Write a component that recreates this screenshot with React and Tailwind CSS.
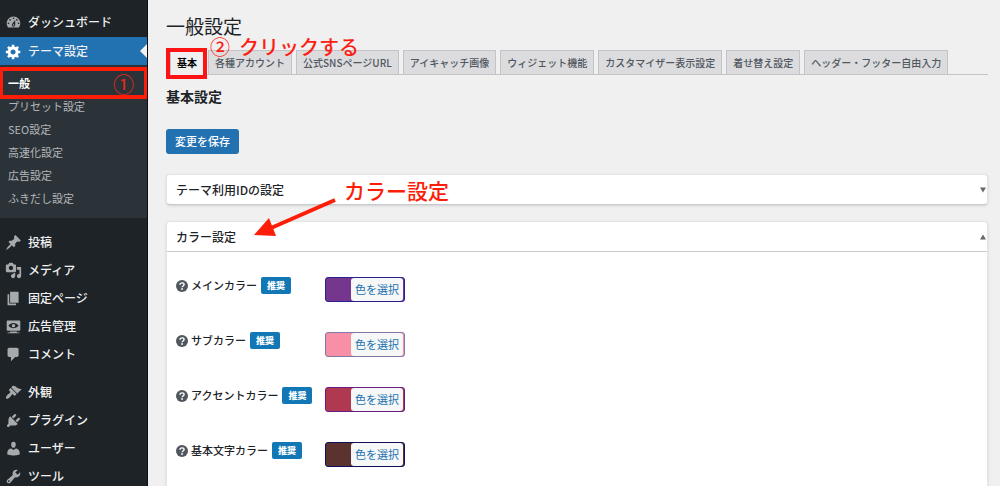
const PATHS = {
  dashboard:
    'M3.76 16h12.48c1.1-1.37 1.76-3.11 1.76-5 0-4.42-3.58-8-8-8s-8 3.58-8 8c0 1.89.66 3.63 1.76 5zM10 4c.55 0 1 .45 1 1s-.45 1-1 1-1-.45-1-1 .45-1 1-1zM6 6c.55 0 1 .45 1 1s-.45 1-1 1-1-.45-1-1 .45-1 1-1zm8 0c.55 0 1 .45 1 1s-.45 1-1 1-1-.45-1-1 .45-1 1-1zm-5.37 5.55L12 7v6c0 1.1-.9 2-2 2s-2-.9-2-2c0-.57.24-1.08.63-1.45zM4 10c.55 0 1 .45 1 1s-.45 1-1 1-1-.45-1-1 .45-1 1-1zm12 0c.55 0 1 .45 1 1s-.45 1-1 1-1-.45-1-1 .45-1 1-1zm-5 3c0-.55-.45-1-1-1s-1 .45-1 1 .45 1 1 1 1-.45 1-1z',
  gear:
    'M18 12h-2.18c-.17.7-.44 1.35-.81 1.93l1.54 1.54-2.1 2.1-1.54-1.54c-.58.36-1.23.63-1.91.79V19H8v-2.18c-.68-.16-1.33-.43-1.91-.79l-1.54 1.54-2.12-2.12 1.54-1.54c-.36-.58-.63-1.23-.79-1.91H1V9.03h2.17c.16-.7.44-1.35.8-1.94L2.43 5.55l2.1-2.1 1.54 1.54c.58-.37 1.24-.64 1.93-.81V2h3v2.18c.68.16 1.33.43 1.91.79l1.54-1.54 2.12 2.12-1.54 1.54c.36.59.64 1.24.8 1.94H18V12zm-8.5 1.5c1.66 0 3-1.34 3-3s-1.34-3-3-3-3 1.34-3 3 1.34 3 3 3z',
  pin:
    'M10.44 3.02l1.82-1.82 6.36 6.35-1.83 1.82c-1.05-.68-2.48-.57-3.41.36l-.75.75c-.92.93-1.04 2.35-.35 3.41l-1.83 1.82-2.41-2.41-2.8 2.79c-.42.42-3.38 2.71-3.8 2.29s1.86-3.39 2.28-3.81l2.79-2.79L4.1 9.36l1.83-1.82c1.05.69 2.48.57 3.4-.36l.75-.75c.93-.92 1.05-2.35.36-3.41z',
  media:
    'M13 11V4c0-.55-.45-1-1-1h-1.67L9 1H5L3.67 3H2c-.55 0-1 .45-1 1v7c0 .55.45 1 1 1h10c.55 0 1-.45 1-1zM7 4.5c1.38 0 2.5 1.12 2.5 2.5S8.38 9.5 7 9.5 4.5 8.38 4.5 7 5.62 4.5 7 4.5zM14 6h5v10.5c0 1.38-1.12 2.5-2.5 2.5S14 17.88 14 16.5s1.12-2.5 2.5-2.5c.17 0 .34.02.5.05V9h-3V6zm-4 8.05V13h2v3.5c0 1.38-1.12 2.5-2.5 2.5S7 17.88 7 16.5 8.12 14 9.5 14c.17 0 .34.02.5.05z',
  page: 'M6 15V2h10v13H6zm-1 1h8v2H3V5h2v11z',
  view:
    'M18 14V4c0-.55-.45-1-1-1H3c-.55 0-1 .45-1 1v10c0 .55.45 1 1 1h14c.55 0 1-.45 1-1zm-8-8c2.3 0 4.4 1.14 6 3-1.6 1.86-3.7 3-6 3s-4.4-1.14-6-3c1.6-1.86 3.7-3 6-3zm2 3c0-1.1-.9-2-2-2s-2 .9-2 2 .9 2 2 2 2-.9 2-2zm2 8h3v1H3v-1h3v-1h8v1z',
  comment: 'M5 2h9c1.1 0 2 .9 2 2v7c0 1.1-.9 2-2 2h-2l-5 5v-5H5c-1.1 0-2-.9-2-2V4c0-1.1.9-2 2-2z',
  brush:
    'M14.48 11.06L7.41 3.99l1.5-1.5c.5-.56 2.3-.47 3.51.32 1.21.8 1.43 1.28 2.91 2.1 1.18.64 2.45 1.26 4.45.85zm-.71.71L6.7 4.7 4.93 6.47c-.39.39-.39 1.02 0 1.41l1.06 1.06c.39.39.39 1.03 0 1.42-.6.6-1.43 1.11-2.21 1.69-.35.26-.7.53-1.01.84C1.43 14.23.4 16.08 1.4 17.07c.99 1 2.84-.03 4.18-1.36.31-.31.58-.66.85-1.02.57-.78 1.08-1.61 1.69-2.21.39-.39 1.02-.39 1.41 0l1.06 1.06c.39.39 1.02.39 1.41 0z',
  plug:
    'M13.11 4.36L9.87 7.6 8 5.73l3.24-3.24c.35-.34 1.05-.2 1.56.32.52.51.66 1.21.31 1.55zm-8 1.77l.91-1.12 9.01 9.01-1.19.84c-.71.71-2.63 1.16-3.82 1.16H6.14L4.9 17.26c-.59.59-1.54.59-2.12 0-.59-.58-.59-1.53 0-2.12l1.24-1.24v-3.88c0-1.13.4-3.19 1.09-3.89zm7.26 3.97l3.24-3.24c.34-.35 1.04-.21 1.55.31.52.51.66 1.21.31 1.55l-3.24 3.25z',
  user:
    'M10 9.25c-2.27 0-2.73-3.44-2.73-3.44C7 4.02 7.82 2 9.97 2c2.16 0 2.98 2.02 2.71 3.81 0 0-.41 3.44-2.68 3.44zm0 2.57L12.72 10c2.39 0 4.52 2.33 4.52 4.53v2.49s-3.65 1.13-7.24 1.13c-3.65 0-7.24-1.13-7.24-1.13v-2.49c0-2.25 1.94-4.48 4.47-4.48z',
  wrench:
    'M16.68 9.77c-1.34 1.34-3.3 1.67-4.95.99l-5.41 6.52c-.99.99-2.59.99-3.58 0s-.99-2.59 0-3.57l6.52-5.42c-.68-1.65-.35-3.61.99-4.95 1.28-1.28 3.12-1.62 4.72-1.06l-2.89 2.89 2.82 2.82 2.86-2.87c.53 1.58.18 3.39-1.08 4.65zM3.81 16.21c.4.39 1.04.39 1.43 0 .4-.4.4-1.04 0-1.43-.39-.4-1.03-.4-1.43 0-.39.39-.39 1.03 0 1.43z',
};

const SUBMENU = ['一般', 'プリセット設定', 'SEO設定', '高速化設定', '広告設定', 'ふきだし設定'];

const CONTENT_MENU = [
  ['pin', '投稿'],
  ['media', 'メディア'],
  ['page', '固定ページ'],
  ['view', '広告管理'],
  ['comment', 'コメント'],
];

const SITE_MENU = [
  ['brush', '外観'],
  ['plug', 'プラグイン'],
  ['user', 'ユーザー'],
  ['wrench', 'ツール'],
];

const TABS = [
  '基本',
  '各種アカウント',
  '公式SNSページURL',
  'アイキャッチ画像',
  'ウィジェット機能',
  'カスタマイザー表示設定',
  '着せ替え設定',
  'ヘッダー・フッター自由入力',
];

const COLORS = [
  { label: 'メインカラー', swatch: 'bg-[#75368d]', border: 'border-[#29208f]' },
  { label: 'サブカラー', swatch: 'bg-[#f78fa7]', border: 'border-[#8079a8]' },
  { label: 'アクセントカラー', swatch: 'bg-[#b03850]', border: 'border-[#661c80]' },
  { label: '基本文字カラー', swatch: 'bg-[#5a332f]', border: 'border-[#10115c]' },
];

function Icon({ name }) {
  return (
    <svg viewBox="0 0 20 20" className="size-[17px] shrink-0 fill-current" aria-hidden="true">
      <path d={PATHS[name]} />
    </svg>
  );
}

function MenuItem({ icon, label, active }) {
  return (
    <li className={active ? 'relative bg-[#2271b1] text-white' : 'text-[#a7aaad]'}>
      <a href="#" className="flex h-7 items-center gap-[6px] pl-[5px] text-[12px] font-medium">
        <Icon name={icon} />
        <span className="text-[#f0f0f1]">{label}</span>
      </a>
      {active && (
        <span className="absolute top-1/2 right-0 -translate-y-1/2 border-y-[7px] border-r-[7px] border-y-transparent border-r-[#f0f0f1]" />
      )}
    </li>
  );
}

function Sidebar() {
  return (
    <nav className="w-[148px] shrink-0 overflow-hidden border-r border-[#0c0f12] bg-[#1d2327] pt-2">
      <ul>
        <MenuItem icon="dashboard" label="ダッシュボード" />
      </ul>
      <ul className="mt-px">
        <MenuItem icon="gear" label="テーマ設定" active />
      </ul>
      <ul className="bg-[#2c3338] pt-[7px] pb-2">
        {SUBMENU.map((label, i) => (
          <li key={label} className="relative">
            <a
              href="#"
              className={`flex h-[23px] items-center pl-2 text-[11px] ${
                i === 0 ? 'font-bold text-white' : 'text-[#b3b7bb]'
              }`}
            >
              {label}
            </a>
            {i === 0 && (
              <span className="absolute -inset-x-px -top-[5px] -bottom-1 flex items-center justify-end border-4 border-[#fc1e08] pr-[10px] text-[21px] leading-none text-[#e8291a]">
                ①
              </span>
            )}
          </li>
        ))}
      </ul>
      <ul className="mt-[10px]">
        {CONTENT_MENU.map(([icon, label]) => (
          <MenuItem key={label} icon={icon} label={label} />
        ))}
      </ul>
      <ul className="mt-[10px]">
        {SITE_MENU.map(([icon, label]) => (
          <MenuItem key={label} icon={icon} label={label} />
        ))}
      </ul>
    </nav>
  );
}

function Tabs() {
  return (
    <nav className="relative mt-3 flex items-end gap-1 border-b border-[#c3c4c7] pl-1 whitespace-nowrap">
      {TABS.map((label, i) => (
        <a
          key={label}
          href="#"
          className={`-mb-px flex h-[25px] items-center border px-[6px] text-[10px] ${
            i === 0
              ? 'border-[#c3c4c7] border-b-[#f0f0f1] bg-[#f0f0f1] font-bold text-black'
              : 'border-[#c3c4c7] bg-[#dcdcde] font-medium text-[#50575e]'
          }`}
        >
          {label}
        </a>
      ))}
      <span className="absolute -top-0.5 left-0 h-[31px] w-[41px] border-4 border-[#fc1414]" />
      <span className="absolute -top-[13px] left-11 flex gap-[9px] text-[20px] leading-5 font-medium text-[#fc1e14]">
        <span>②</span>
        <span>クリックする</span>
      </span>
    </nav>
  );
}

function PanelHeader({ title, open }) {
  return (
    <button
      type="button"
      aria-expanded={open}
      className="flex h-[29px] w-full items-center justify-between pr-px pl-[9px] text-[12px] font-medium text-[#1d2327]"
    >
      {title}
      <svg viewBox="0 0 6 6" className="size-[6px] fill-[#646970]" aria-hidden="true">
        <path d={open ? 'M0 5.5 3 .5l3 5z' : 'M0 .5h6l-3 5z'} />
      </svg>
    </button>
  );
}

function ColorRow({ label, swatch, border }) {
  return (
    <div className="flex h-[55px] items-start">
      <div className="flex h-[17px] w-[149px] items-center text-[11px] font-medium text-[#1d2327]">
        <svg viewBox="0 0 20 20" className="mr-[3px] size-3 shrink-0" aria-hidden="true">
          <circle cx="10" cy="10" r="10" className="fill-[#50575e]" />
          <path
            d="M6.6 8c0-2 1.5-3.2 3.5-3.2s3.4 1.2 3.4 2.9c0 2.3-3.3 2.3-3.3 4.5"
            className="fill-none stroke-white stroke-[2.4]"
          />
          <circle cx="10.1" cy="15" r="1.5" className="fill-white" />
        </svg>
        {label}
        <span className="ml-1 flex h-[17px] items-center rounded-xs bg-[#1177b5] px-[6px] text-[9px] font-black text-white">
          推奨
        </span>
      </div>
      <button
        type="button"
        aria-label={`${label} 色を選択`}
        className={`flex h-[25px] rounded-[3px] border pr-px ${border} ${swatch}`}
      >
        <span className="ml-[25px] flex h-full items-center rounded-[3px] bg-[#f6f7f7] px-1 text-[11px] text-[#2271b1]">
          色を選択
        </span>
      </button>
    </div>
  );
}

export default function App() {
  return (
    <div className="flex h-screen overflow-hidden bg-[#f0f0f1] font-['Noto_Sans_CJK_JP',sans-serif] text-[#1d2327]">
      <Sidebar />
      <main className="flex min-w-0 flex-1 flex-col pt-[14px] pr-3 pl-[18px]">
        <h1 className="text-[19px] leading-6">一般設定</h1>
        <Tabs />
        <h2 className="mt-[11px] text-[14px] leading-5 font-bold">基本設定</h2>
        <button
          type="button"
          className="mt-[23px] h-[25px] shrink-0 self-start rounded-[3px] bg-[#2271b1] px-[9px] text-[11px] font-medium text-white"
        >
          変更を保存
        </button>
        <section className="relative mt-5 rounded-[4px] border border-[#e3e4e6] border-b-[#c9cacd] bg-white shadow-sm">
          <PanelHeader title="テーマ利用IDの設定" open={false} />
          <div className="absolute top-[3px] left-[86px] flex items-start text-[#fc1e08]">
            <svg viewBox="0 0 84 40" className="mt-5 h-10 w-[84px]" aria-hidden="true">
              <path d="M82 2 18 30" className="fill-none stroke-current stroke-[4]" />
              <path d="M1 37 16 20l7 18z" className="fill-current" />
            </svg>
            <span className="ml-[7px] text-[21px] leading-6 font-medium">カラー設定</span>
          </div>
        </section>
        <section className="mt-4 flex-1 rounded-t-[4px] border border-b-0 border-[#e3e4e6] bg-white shadow-sm">
          <PanelHeader title="カラー設定" open />
          <div className="border-t border-[#c9cacd] pt-[25px] pl-[9px]">
            {COLORS.map((c) => (
              <ColorRow key={c.label} {...c} />
            ))}
          </div>
        </section>
      </main>
    </div>
  );
}
